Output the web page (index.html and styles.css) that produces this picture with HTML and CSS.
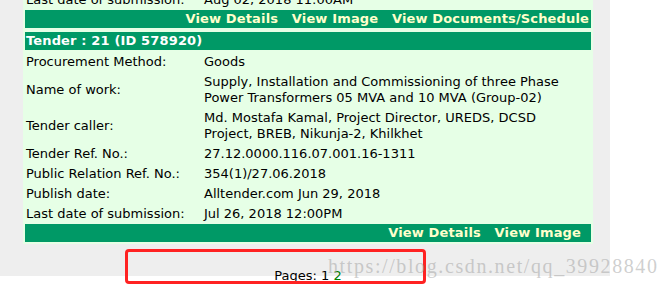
FILE: index.html
```html
<!DOCTYPE html>
<html lang="en">
<head>
  <meta charset="UTF-8">
  <title>Tender List</title>
  <link rel="stylesheet" href="styles.css">
</head>
<body>
  <div class="page">
    <div class="panel">
      <div class="tender">
        <table class="info">
          <tr><td class="label">Last date of submission:</td><td>Aug 02, 2018 11:00AM</td></tr>
        </table>
        <div class="bar actions">
          <a href="#">View Details</a>
          <a href="#">View Image</a>
          <a href="#">View Documents/Schedule</a>
        </div>
      </div>

      <div class="tender">
        <div class="bar title">Tender : 21 (ID 578920)</div>
        <table class="info">
          <tr><td class="label">Procurement Method:</td><td>Goods</td></tr>
          <tr><td class="label">Name of work:</td><td>Supply, Installation and Commissioning of three Phase Power Transformers 05 MVA and 10 MVA (Group-02)</td></tr>
          <tr><td class="label">Tender caller:</td><td>Md. Mostafa Kamal, Project Director, UREDS, DCSD Project, BREB, Nikunja-2, Khilkhet</td></tr>
          <tr><td class="label">Tender Ref. No.:</td><td>27.12.0000.116.07.001.16-1311</td></tr>
          <tr><td class="label">Public Relation Ref. No.:</td><td>354(1)/27.06.2018</td></tr>
          <tr><td class="label">Publish date:</td><td>Alltender.com Jun 29, 2018</td></tr>
          <tr><td class="label">Last date of submission:</td><td>Jul 26, 2018 12:00PM</td></tr>
        </table>
        <div class="bar actions short">
          <a href="#">View Details</a>
          <a href="#">View Image</a>
        </div>
      </div>
    </div>

    <div class="pages">Pages: <span class="current">1</span> <a href="#">2</a></div>
  </div>

  <div class="highlight"></div>
  <div class="watermark">https://blog.csdn.net/qq_39928840</div>
</body>
</html>
```

FILE: styles.css
```css
html, body {
  margin: 0;
  height: 100%;
  background-color: #fff;
  overflow: hidden;
}

body {
  font-family: "DejaVu Sans", Verdana, sans-serif;
  font-size: 13px;
  color: #000;
}

.page {
  width: 610px;
  height: 100%;
  background-color: #eeeeee;
  padding-left: 23px;
  box-sizing: border-box;
  margin-top: -10px;
}

.panel {
  width: 570px;
  padding: 0 2px 2px;
  box-sizing: border-box;
  background-color: #e6ffe6;
}

.tender + .tender {
  margin-top: 4px;
}

.info {
  width: 100%;
  border-collapse: collapse;
}

.info td {
  padding: 2px 12px 2px 0;
  line-height: 16px;
  vertical-align: middle;
}

.info td.label {
  width: 166px;
  padding-left: 1px;
}

.bar {
  height: 18px;
  line-height: 18px;
  background-color: #009966;
  font-weight: bold;
  letter-spacing: 0.15px;
  padding: 0 2px 0 1px;
  white-space: nowrap;
}

.title {
  color: #fff;
  margin-bottom: 2px;
}

.actions {
  text-align: right;
}

.actions.short {
  padding-right: 10px;
}

.actions a {
  color: #ffffcc;
  text-decoration: none;
  margin-left: 9px;
}

.pages {
  width: 570px;
  text-align: center;
  margin-top: 24px;
  line-height: 16px;
}

.pages a {
  color: #008000;
  text-decoration: none;
}

.highlight {
  position: absolute;
  left: 125px;
  top: 249px;
  width: 301px;
  height: 35px;
  box-sizing: border-box;
  border: 3px solid #ff2222;
  border-radius: 4px;
}

.watermark {
  position: absolute;
  left: 328px;
  top: 256px;
  font-family: "Liberation Serif", serif;
  font-size: 20px;
  line-height: 20px;
  letter-spacing: 1.6px;
  color: rgba(160, 160, 160, 0.5);
  white-space: nowrap;
}
```
